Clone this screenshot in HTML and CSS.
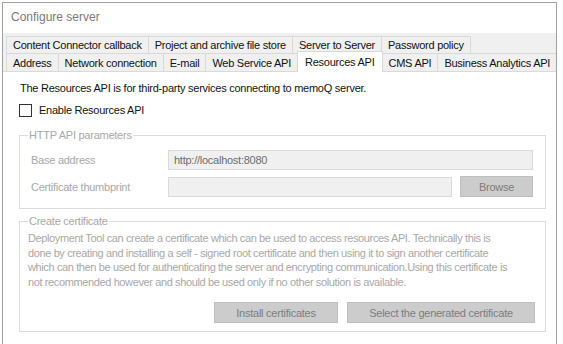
FILE: index.html
```html
<!DOCTYPE html>
<html lang="en">
<head>
    <meta charset="UTF-8">
    <title>Configure server</title>
    <link rel="stylesheet" href="styles.css">
</head>
<body>
    <div class="window">
        <div class="title">Configure server</div>

        <div class="tabs">
            <div class="tab-row back">
                <div class="tab">Content Connector callback</div>
                <div class="tab">Project and archive file store</div>
                <div class="tab">Server to Server</div>
                <div class="tab">Password policy</div>
            </div>
            <div class="tab-row front">
                <div class="tab">Address</div>
                <div class="tab">Network connection</div>
                <div class="tab">E-mail</div>
                <div class="tab">Web Service API</div>
                <div class="tab active">Resources API</div>
                <div class="tab">CMS API</div>
                <div class="tab">Business Analytics API</div>
            </div>
        </div>

        <div class="panel">
            <p class="intro">The Resources API is for third-party services connecting to memoQ server.</p>

            <label class="check">
                <span class="box"></span>
                Enable Resources API
            </label>

            <fieldset class="group">
                <legend>HTTP API parameters</legend>
                <div class="field">
                    <span class="field-label">Base address</span>
                    <div class="input">http://localhost:8080</div>
                </div>
                <div class="field">
                    <span class="field-label">Certificate thumbprint</span>
                    <div class="input short"></div>
                    <button class="btn browse">Browse</button>
                </div>
            </fieldset>

            <fieldset class="group cert">
                <legend>Create certificate</legend>
                <p class="desc">Deployment Tool can create a certificate which can be used to access resources API. Technically this is<br>done by creating and installing a self - signed root certificate and then using it to sign another certificate<br>which can then be used for authenticating the server and encrypting communication.Using this certificate is<br>not recommended however and should be used only if no other solution is available.</p>
                <div class="actions">
                    <button class="btn install">Install certificates</button>
                    <button class="btn select">Select the generated certificate</button>
                </div>
            </fieldset>
        </div>
    </div>
</body>
</html>
```

FILE: styles.css
```css
body {
    margin: 0;
    background: #fff;
    font-family: "Liberation Sans", Arial, sans-serif;
    font-size: 11px;
    letter-spacing: -0.25px;
    color: #111;
}

.window {
    margin: 2px 0 0 2px;
    width: 553px;
    height: 341px;
    overflow: hidden;
    border: 1px solid #a0a0a0;
    border-bottom: none;
    background: #fff;
}

.title {
    height: 30px;
    padding-left: 8px;
    line-height: 28px;
    font-size: 12px;
    letter-spacing: 0;
    color: #7a7a7a;
}

.tabs {
    background: #f0f0f0;
    padding: 3px 0 0 3px;
    border-bottom: 1px solid #d9d9d9;
}

.tab-row {
    display: flex;
    height: 17px;
}

.tab {
    padding: 0 6px;
    line-height: 17px;
    border: 1px solid #d9d9d9;
    border-bottom: none;
    margin-right: -1px;
    background: #f0f0f0;
    white-space: nowrap;
}

.front {
    height: 18px;
}

.front .tab {
    line-height: 18px;
}

.tab.active {
    background: #fff;
    margin-top: -2px;
    margin-bottom: -1px;
    line-height: 20px;
    position: relative;
    padding: 0 7px;
}

.panel {
    padding: 10px 10px 0 16px;
}

.intro {
    margin: 0 0 9px 1px;
}

.check {
    display: flex;
    align-items: center;
    gap: 7px;
    height: 14px;
}

.box {
    width: 11px;
    height: 11px;
    border: 1px solid #333;
    background: #fff;
}

.group {
    margin: 12px 0 0 0;
    padding: 8px 10px 11px 11px;
    width: 504px;
    border: 1px solid #dcdcdc;
    color: #a8a8a8;
}

.group legend {
    padding: 0 1px;
    margin-left: -3px;
}

.field {
    display: flex;
    align-items: center;
    height: 21px;
    margin-top: 6px;
}

.field:first-of-type {
    margin-top: 0;
}

.field-label {
    width: 137px;
}

.input {
    width: 358px;
    height: 18px;
    line-height: 18px;
    padding-left: 5px;
    background: #f0f0f0;
    border: 1px solid #dadada;
    color: #6d6d6d;
}

.input.short {
    width: 277px;
}

.btn {
    font-family: inherit;
    font-size: 11px;
    letter-spacing: -0.25px;
    height: 21px;
    background: #cccccc;
    border: 1px solid #bfbfbf;
    color: #7d7d7d;
    padding: 0;
}

.browse {
    width: 73px;
    margin-left: 8px;
}

.group.cert {
    margin-top: 6px;
    padding-top: 4px;
    padding-bottom: 8px;
}

.desc {
    margin: 0 0 0 -3px;
    line-height: 14.5px;
    letter-spacing: -0.38px;
    white-space: nowrap;
}

.actions {
    display: flex;
    justify-content: flex-end;
    gap: 9px;
    margin-top: 13px;
}

.install {
    width: 124px;
}

.select {
    width: 188px;
}
```
